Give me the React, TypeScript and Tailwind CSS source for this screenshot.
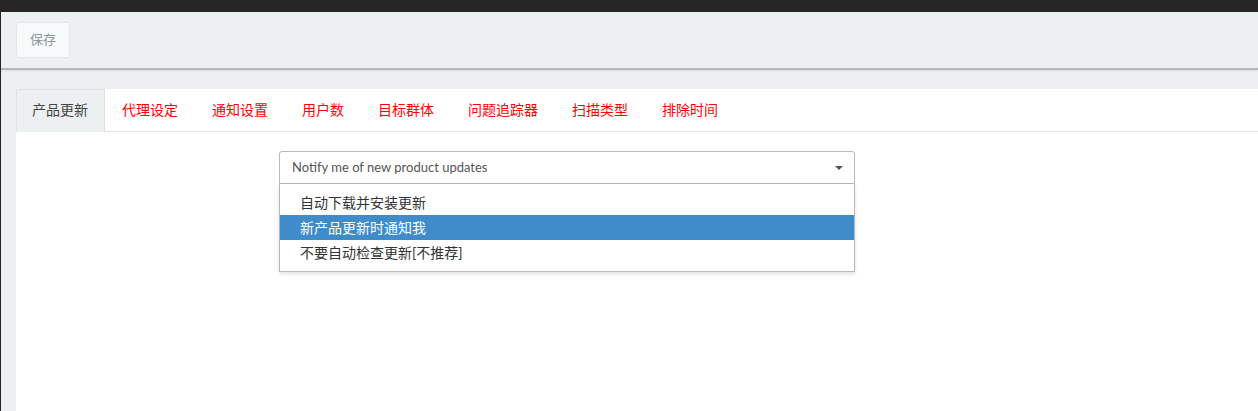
const tabs = ['产品更新', '代理设定', '通知设置', '用户数', '目标群体', '问题追踪器', '扫描类型', '排除时间'];

const options = ['自动下载并安装更新', '新产品更新时通知我', '不要自动检查更新[不推荐]'];

const font = { fontFamily: 'Lato, "Noto Sans CJK SC", sans-serif' };

export default function App() {
  return (
    <div className="h-[411px] w-full overflow-hidden bg-[#262626] pt-[12px] pl-px" style={font}>
      <div className="flex h-full flex-col bg-[#ecf0f1]">
        {/* toolbar */}
        <div className="flex h-[58px] shrink-0 items-start border-b-2 border-[#b3b5b6] px-[15px] pt-[10px] shadow-[0_1px_2px_rgba(0,0,0,0.08)]">
          <button className="h-[36px] w-[54px] rounded-[3px] border border-[#e2e7ea] bg-[#f7f9fa] text-[13px] text-[#8b979f]">
            保存
          </button>
        </div>

        {/* tab panel */}
        <div className="ml-[15px] mt-[19px] flex flex-1 flex-col bg-white">
          <div className="flex border-b border-[#dee2e6]">
            {tabs.map((t, i) => (
              <div
                key={t}
                className={
                  i === 0
                    ? '-mb-px border border-b-0 border-[#dee2e6] bg-[#ecf0f1] pl-[15px] pr-4 py-[10px] text-[14px] leading-[20px] text-[#444]'
                    : 'border border-transparent px-4 py-[10px] text-[14px] leading-[20px] text-[#f00]'
                }
              >
                {t}
              </div>
            ))}
          </div>

          <div className="pl-[263px] pt-[19px]">
            <div className="w-[576px]">
              <div className="flex h-[33px] items-center justify-between rounded-t-[3px] border border-[#bdb5b8] pl-[12px] pr-[11px] text-[13px] text-[#555]">
                <span>Notify me of new product updates</span>
                <svg width="8" height="4" viewBox="0 0 8 4">
                  <path d="M0 0h8L4 4z" fill="#4a545c" />
                </svg>
              </div>
              <div className="border border-t-0 border-[#bdb5b8] py-[6px] shadow-[0_2px_4px_rgba(0,0,0,0.12)]">
                {options.map((o, i) => (
                  <div
                    key={o}
                    className={
                      'flex h-[25px] items-center pl-[20px] text-[14px] ' +
                      (i === 1 ? 'bg-[#408bc9] text-white' : 'text-[#333]')
                    }
                  >
                    {o}
                  </div>
                ))}
              </div>
            </div>
          </div>
        </div>
      </div>
    </div>
  );
}
